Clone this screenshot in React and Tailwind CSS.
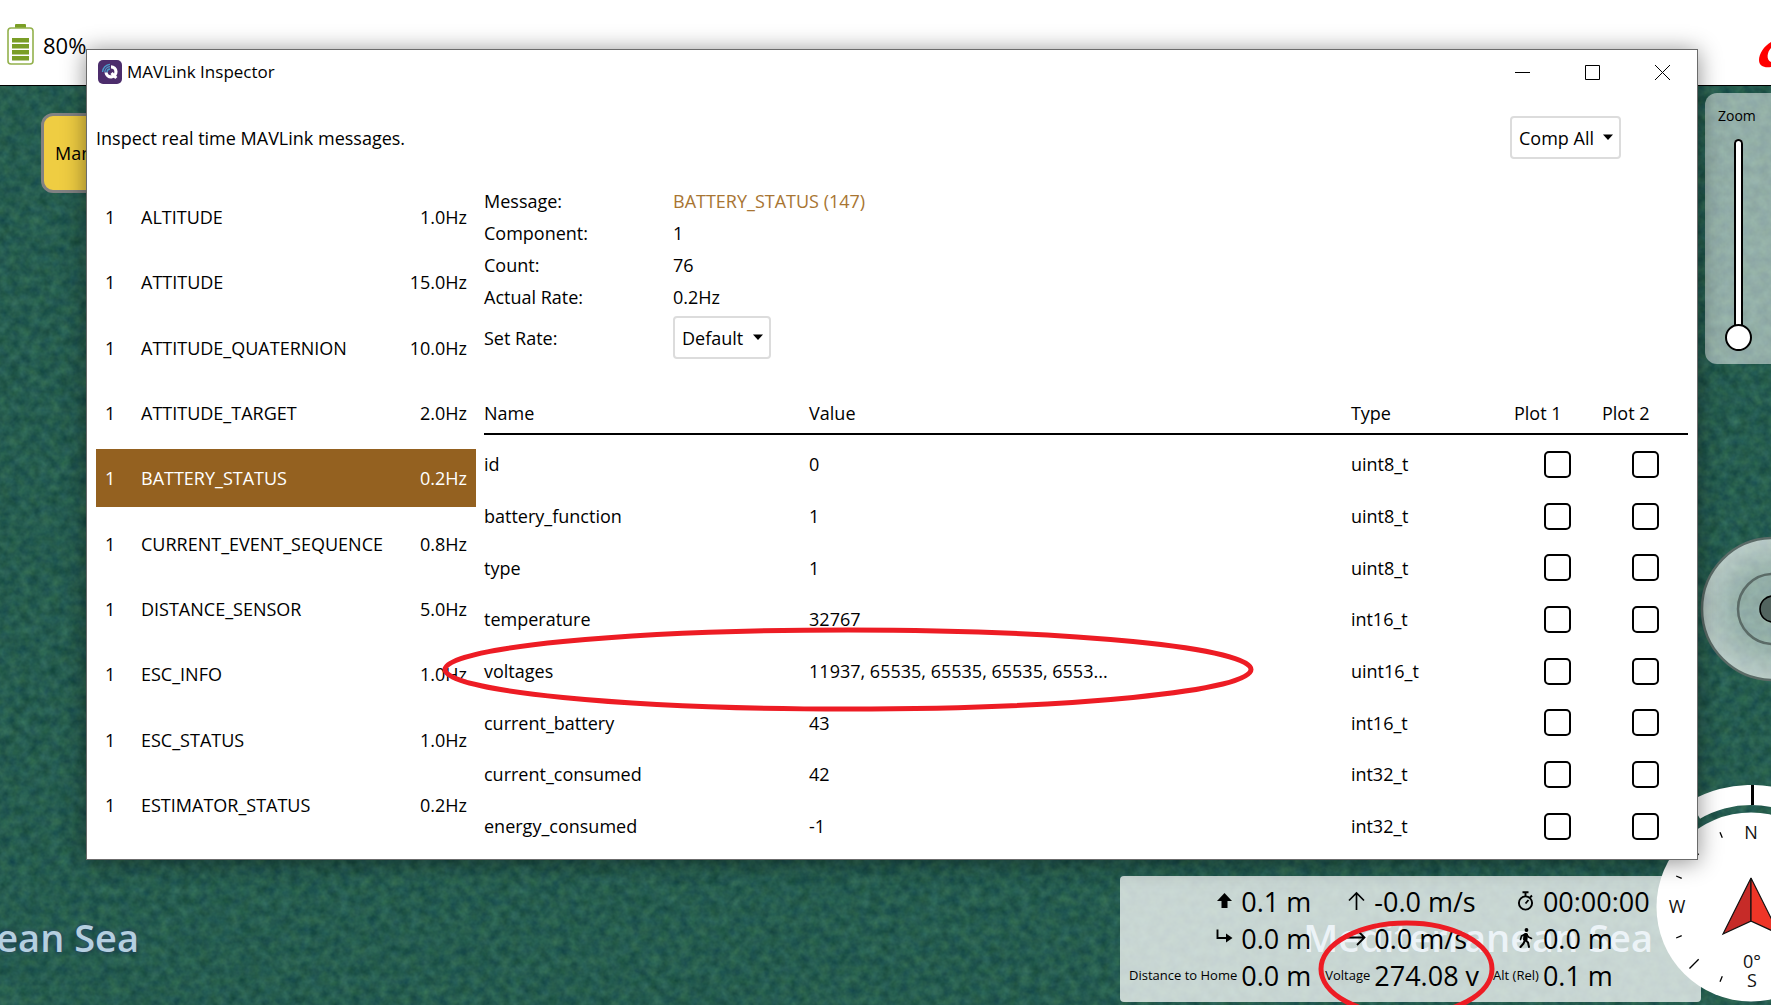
import React from "react";

const MESSAGES = [
  ["ALTITUDE", "1.0Hz"],
  ["ATTITUDE", "15.0Hz"],
  ["ATTITUDE_QUATERNION", "10.0Hz"],
  ["ATTITUDE_TARGET", "2.0Hz"],
  ["BATTERY_STATUS", "0.2Hz"],
  ["CURRENT_EVENT_SEQUENCE", "0.8Hz"],
  ["DISTANCE_SENSOR", "5.0Hz"],
  ["ESC_INFO", "1.0Hz"],
  ["ESC_STATUS", "1.0Hz"],
  ["ESTIMATOR_STATUS", "0.2Hz"],
];

const FIELDS = [
  ["id", "0", "uint8_t"],
  ["battery_function", "1", "uint8_t"],
  ["type", "1", "uint8_t"],
  ["temperature", "32767", "int16_t"],
  ["voltages", "11937, 65535, 65535, 65535, 6553...", "uint16_t"],
  ["current_battery", "43", "int16_t"],
  ["current_consumed", "42", "int32_t"],
  ["energy_consumed", "-1", "int32_t"],
];

const SUMMARY = [
  ["Message:", "BATTERY_STATUS (147)"],
  ["Component:", "1"],
  ["Count:", "76"],
  ["Actual Rate:", "0.2Hz"],
];

function SeaTexture() {
  return (
    <svg className="absolute inset-0 h-full w-full" aria-hidden="true">
      <filter id="sea" x="0" y="0" width="100%" height="100%" colorInterpolationFilters="sRGB">
        <feTurbulence type="fractalNoise" baseFrequency="0.1" numOctaves="3" seed="7" />
        <feColorMatrix values="0.16 0 0.03 0 0.05  0.2 0 0 0 0.26  0.12 0.09 0 0 0.205  0 0 0 0 1" />
      </filter>
      <rect width="100%" height="100%" filter="url(#sea)" />
    </svg>
  );
}

function BatteryIcon() {
  return (
    <svg width="28" height="42" viewBox="0 0 28 42" aria-hidden="true">
      <rect x="8" y="0" width="11" height="5" rx="1" fill="#7a9e26" />
      <rect x="1" y="4" width="25" height="36" rx="3" fill="#fff" stroke="#93b14c" strokeWidth="1.6" />
      {[14, 20, 26, 32].map((y) => (
        <rect key={y} x="5" y={y} width="17" height="4.5" fill="#7a9e26" />
      ))}
    </svg>
  );
}

function AppIcon() {
  return (
    <svg width="24" height="24" viewBox="0 0 24 24" aria-hidden="true">
      <rect width="24" height="24" rx="5" fill="#4c2d6c" />
      <path d="M13 6.800a5 5 0 1 1-5 5.600" fill="none" stroke="#fff" strokeWidth="3.200" />
      <path d="M13.500 13l4.800 5" stroke="#fff" strokeWidth="3" />
      <path d="M4.500 12a8 8 0 0 1 7.500-7.600M6.800 12.200a5.600 5.600 0 0 1 5.200-5.500M9 12.200a3.300 3.300 0 0 1 3-3.200" fill="none" stroke="#4a9ccb" strokeWidth="1.300" />
    </svg>
  );
}

function Caret() {
  return (
    <svg className="pointer-events-none absolute right-[8px] top-[18px]" width="10" height="6" viewBox="0 0 10 6" aria-hidden="true">
      <path d="M0 0.500h10L5 6z" fill="#000" />
    </svg>
  );
}

function Dropdown({ id, value, label }) {
  return (
    <div className="relative w-fit">
      <select
        id={id}
        aria-label={label}
        className="h-[43px] appearance-none rounded border-2 border-[#dcdcdc] bg-white pl-[7px] pr-[25px] text-lg text-black"
      >
        <option>{value}</option>
      </select>
      <Caret />
    </div>
  );
}

function WindowControls() {
  return (
    <div className="flex items-center">
      <button aria-label="Minimize" className="flex h-11 w-[70px] items-center justify-center">
        <svg width="15" height="15" viewBox="0 0 15 15"><path d="M0 7.500h15" stroke="#000" /></svg>
      </button>
      <button aria-label="Maximize" className="flex h-11 w-[70px] items-center justify-center">
        <svg width="15" height="15" viewBox="0 0 15 15"><path d="M.5.5h14v14H.5z" fill="none" stroke="#000" /></svg>
      </button>
      <button aria-label="Close" className="flex h-11 w-[70px] items-center justify-center">
        <svg width="15" height="15" viewBox="0 0 15 15"><path d="M0 0l15 15M15 0L0 15" stroke="#000" /></svg>
      </button>
    </div>
  );
}

function MessageList() {
  return (
    <div className="flex w-[380px] shrink-0 flex-col justify-between pb-[25px]">
      {MESSAGES.map(([name, rate]) => (
        <button
          key={name}
          className={
            name === "BATTERY_STATUS"
              ? "flex h-[58px] items-center bg-[#946120] px-[9px] text-white"
              : "flex h-[58px] items-center px-[9px]"
          }
        >
          <span className="w-9 text-left">1</span>
          <span className="flex-1 text-left">{name}</span>
          <span>{rate}</span>
        </button>
      ))}
    </div>
  );
}

function MessageDetail() {
  return (
    <div className="min-w-0 flex-1 pl-2 pr-[9px]">
      <dl className="grid grid-cols-[189px_auto] leading-8">
        {SUMMARY.map(([label, value], i) => (
          <React.Fragment key={label}>
            <dt>{label}</dt>
            <dd className={i === 0 ? "text-[#a87532]" : ""}>{value}</dd>
          </React.Fragment>
        ))}
      </dl>
      <div className="mt-[3px] flex items-center">
        <label htmlFor="rate" className="w-[189px]">Set Rate:</label>
        <Dropdown id="rate" value="Default" />
      </div>
      <table className="mt-[34px] w-full table-fixed border-collapse text-left">
        <thead>
          <tr className="h-[41px] border-b-2 border-black">
            <th className="w-[27%] p-0 font-normal">Name</th>
            <th className="w-[45%] p-0 font-normal">Value</th>
            <th className="p-0 font-normal">Type</th>
            <th className="w-[88px] p-0 font-normal">Plot 1</th>
            <th className="w-[86px] p-0 font-normal">Plot 2</th>
          </tr>
        </thead>
        <tbody className="before:block before:h-[3px] before:content-['']">
          {FIELDS.map(([name, value, type]) => (
            <tr key={name} className="h-[52px] [&:nth-child(3n)]:h-[51px]">
              <td className="p-0">{name}</td>
              <td className="p-0">{value}</td>
              <td className="p-0">{type}</td>
              {["Plot 1", "Plot 2"].map((plot) => (
                <td key={plot} className="p-0 pl-[30px]">
                  <input
                    type="checkbox"
                    aria-label={name + " " + plot}
                    className="block size-[27px] appearance-none rounded-[5px] border-2 border-black bg-white"
                  />
                </td>
              ))}
            </tr>
          ))}
        </tbody>
      </table>
    </div>
  );
}

function InspectorWindow() {
  return (
    <section className="absolute bottom-[145px] left-[86px] right-[73px] top-[49px] flex flex-col border border-[#6b6b6b] bg-white text-lg leading-6 text-black shadow-[0_2px_22px_rgba(0,0,0,0.45)]">
      <div className="flex h-11 items-center justify-between pl-[11px]">
        <div className="flex items-center gap-[5px]">
          <AppIcon />
          <h1 className="text-[17px]">MAVLink Inspector</h1>
        </div>
        <WindowControls />
      </div>
      <div className="mt-[22px] flex items-center justify-between pl-[9px] pr-[76px]">
        <p>Inspect real time MAVLink messages.</p>
        <Dropdown id="comp" value="Comp All" label="Component" />
      </div>
      <div className="mt-[26px] flex min-h-0 flex-1 pl-[9px]">
        <div className="flex pt-[3px]">
          <MessageList />
        </div>
        <MessageDetail />
      </div>
    </section>
  );
}

function ZoomPanel() {
  return (
    <div className="absolute -right-4 top-[7px] flex h-[271px] w-[82px] flex-col items-start rounded-xl bg-white/50 pl-[13px] pt-3">
      <label htmlFor="zoom" className="text-sm leading-[22px] text-black">Zoom</label>
      <input
        id="zoom"
        type="range"
        min="0"
        max="100"
        defaultValue="0"
        className="ml-[7px] mt-3 h-[212px] w-[27px] appearance-none bg-transparent [direction:rtl] [writing-mode:vertical-lr] [&::-webkit-slider-runnable-track]:w-[9px] [&::-webkit-slider-runnable-track]:rounded-full [&::-webkit-slider-runnable-track]:bg-white [&::-webkit-slider-runnable-track]:shadow-[inset_0_0_0_2px_#000] [&::-webkit-slider-thumb]:-ml-[9px] [&::-webkit-slider-thumb]:size-[27px] [&::-webkit-slider-thumb]:appearance-none [&::-webkit-slider-thumb]:rounded-full [&::-webkit-slider-thumb]:border-2 [&::-webkit-slider-thumb]:border-black [&::-webkit-slider-thumb]:bg-white"
      />
    </div>
  );
}

function Joystick() {
  return (
    <svg className="absolute -right-[75px] top-[450px]" width="146" height="146" viewBox="-73 -73 146 146" aria-hidden="true">
      <defs>
        <radialGradient id="pad">
          <stop offset="0.45" stopColor="#fff" stopOpacity="0.5" />
          <stop offset="1" stopColor="#fff" stopOpacity="0.68" />
        </radialGradient>
      </defs>
      <circle r="71" fill="url(#pad)" stroke="#5b6b67" strokeWidth="2.500" />
      <circle r="35" fill="none" stroke="#5b6b67" strokeWidth="2.500" />
      <circle r="13" fill="#52645f" stroke="#000" strokeWidth="1.600" />
    </svg>
  );
}

const TICKS = [22.5, 45, 67.5, 112.5, 135, 157.5, 202.5, 225, 247.5, 292.5, 315, 337.5];

function Compass() {
  return (
    <svg className="absolute -right-[102px] bottom-[3px] font-['Open_Sans',sans-serif]" width="244" height="217" viewBox="-122 -122 244 217" aria-hidden="true">
      <path d="M-61 -105.700A122 122 0 0 1 61 -105.700L51 -88.300A102 102 0 0 0 -51 -88.300Z" fill="#fff" />
      <path d="M1.500 -122V-102" stroke="#000" strokeWidth="3" />
      <circle r="94.500" fill="#fff" />
      {TICKS.map((a) => (
        <path key={a} d={a % 45 === 0 ? "M0 -74V-87" : "M0 -75V-81"} transform={"rotate(" + a + ")"} stroke="#000" strokeWidth="1.300" />
      ))}
      <g fontSize="18" textAnchor="middle" fill="#111">
        <text x="0" y="-68">N</text>
        <text x="-74" y="6">W</text>
        <text x="1" y="61">0°</text>
        <text x="1" y="80">S</text>
      </g>
      <path d="M0 -29L-28 27L0 14Z" fill="#c62b28" stroke="#111" strokeWidth="1.200" />
      <path d="M0 -29L28 27L0 14Z" fill="#ee3527" stroke="#111" strokeWidth="1.200" />
    </svg>
  );
}

const ICONS = {
  altitude: <path d="M10.500 2l7.500 8h-4.500v7H7.500v-7H3z" fill="#000" />,
  climb: <path d="M9.500 19V2M2 9.500L9.500 2L17 9.500" fill="none" stroke="#000" strokeWidth="1.700" />,
  distance: (
    <>
      <path d="M3.500 1.500v8.500h9" fill="none" stroke="#000" strokeWidth="1.900" />
      <path d="M12 5.500l6.500 4.500L12 14.500z" fill="#000" />
    </>
  ),
  speed: <path d="M0 9.500h18M10 2l7.500 7.500l-7.500 7.500" fill="none" stroke="#000" strokeWidth="1.800" />,
  timer: (
    <g fill="none" stroke="#000" strokeWidth="1.900">
      <circle cx="9.500" cy="12" r="6.600" />
      <path d="M9.500 5.500V1.500M6.500 1.200h6M14 6.500l2-2M9.500 12.500l3-3.500" />
    </g>
  ),
  walk: (
    <g fill="none" stroke="#000" strokeWidth="2" strokeLinecap="round" strokeLinejoin="round">
      <circle cx="10.500" cy="2" r="1.900" fill="#000" stroke="none" />
      <path d="M9.800 6L9 11.500L12 14.500L13 19M8.800 12.500L7.500 15.500L4.500 19" />
      <path d="M9.500 6L5.500 8L4.500 11.500M10.500 6L12.500 9L15.500 10.500" strokeWidth="1.600" />
      <path d="M8.500 6.500h2.500l-.5 5h-2.500z" fill="#000" />
    </g>
  ),
};

function Cell({ icon, label, value }) {
  return (
    <>
      <dt className="flex items-center justify-end text-[13px]">
        {icon ? (
          <svg className="mr-[3px]" width="20" height="20" viewBox="0 0 20 20" aria-label={icon}>
            {ICONS[icon]}
          </svg>
        ) : (
          label
        )}
      </dt>
      <dd className="pr-[10px] text-[27px]">{value}</dd>
    </>
  );
}

function Telemetry() {
  return (
    <dl className="absolute bottom-[3px] right-[70px] grid h-[126px] w-[581px] grid-cols-[auto_auto_auto_auto_auto_auto] content-center justify-start gap-x-1 whitespace-nowrap rounded bg-white/75 pb-[2px] pl-[9px] leading-[37px] text-black">
      <Cell icon="altitude" value="0.1 m" />
      <Cell icon="climb" value="-0.0 m/s" />
      <Cell icon="timer" value="00:00:00" />
      <Cell icon="distance" value="0.0 m" />
      <Cell icon="speed" value="0.0 m/s" />
      <Cell icon="walk" value="0.0 m" />
      <Cell label="Distance to Home" value="0.0 m" />
      <Cell label="Voltage" value="274.08 v" />
      <Cell label="Alt (Rel)" value="0.1 m" />
    </dl>
  );
}

function Mark({ className }) {
  return (
    <svg className={className} aria-hidden="true">
      <ellipse cx="50%" cy="50%" rx="50%" ry="50%" fill="none" stroke="#ed1c24" strokeWidth="5" />
    </svg>
  );
}

export default function App() {
  return (
    <div className="relative flex min-h-screen flex-col overflow-hidden bg-[#245a4f] font-['Open_Sans','Noto_Sans',sans-serif]">
      <header className="flex h-[86px] items-center justify-between border-b border-black bg-white text-black">
        <div className="flex items-center gap-2 pl-[7px] pt-1">
          <BatteryIcon />
          <span className="text-[22px] leading-8">80%</span>
        </div>
        <svg className="mt-6" width="12" height="28" viewBox="0 0 12 28" aria-hidden="true">
          <path d="M12 1C5 5 0 13 0 19c0 6 5 8 12 7v-5C7 19 8 11 12 7z" fill="#f00" />
        </svg>
      </header>
      <main className="relative flex-1">
        <SeaTexture />
        <button className="absolute left-[41px] top-[27px] h-20 w-24 rounded-xl border-[3px] border-[#828282] bg-[#efcd42] pl-[11px] text-left text-lg text-black">
          Manual
        </button>
        <span className="absolute bottom-[42px] right-[1632px] whitespace-nowrap text-[38px] font-semibold leading-[52px] text-[#b5cfe0] [text-shadow:0_0_4px_#2c3f66]">
          Mediterranean Sea
        </span>
        <span className="absolute bottom-[42px] right-[118px] whitespace-nowrap text-[38px] font-semibold leading-[52px] text-[#b5cfe0]">
          Mediterranean Sea
        </span>
        <ZoomPanel />
        <Joystick />
        <Telemetry />
        <Compass />
      </main>
      <InspectorWindow />
      <Mark className="pointer-events-none absolute left-[445px] top-[630px] h-[79px] w-[calc(100%-965px)] overflow-visible" />
      <Mark className="pointer-events-none absolute -bottom-[10px] right-[279px] h-[92px] w-[171px] overflow-visible" />
    </div>
  );
}
